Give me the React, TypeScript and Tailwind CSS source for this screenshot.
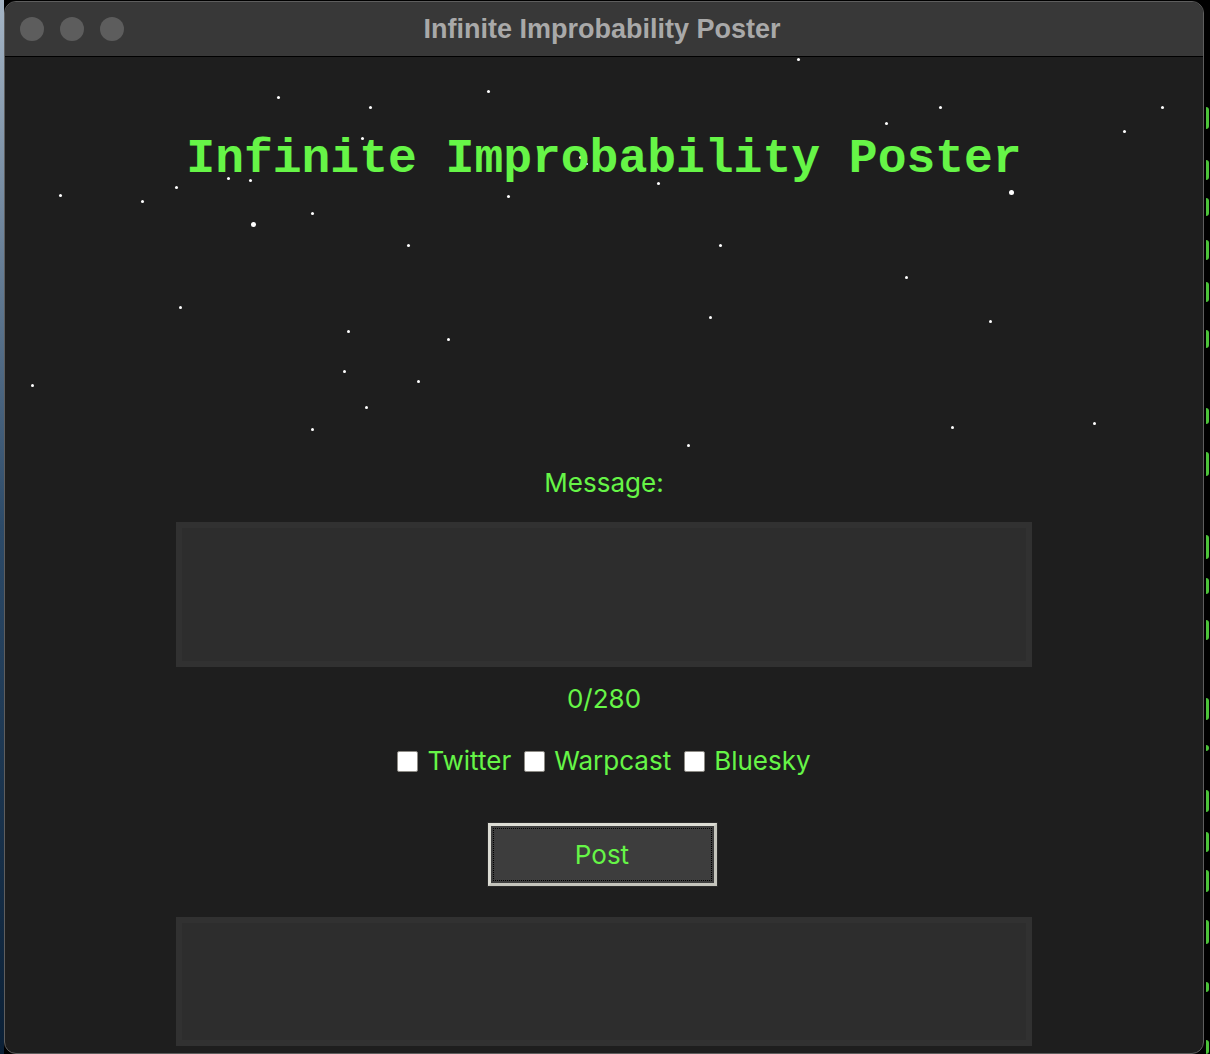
import { useState } from 'react'

// stars on the content canvas, page coordinates [x, y, size]
const stars: [number, number, number][] = [
  [278, 97, 3], [370, 107, 3], [488, 91, 3], [798, 59, 3], [940, 107, 3],
  [1162, 107, 3], [886, 123, 3], [1124, 131, 3], [362, 138, 3], [60, 195, 3],
  [142, 201, 3], [176, 187, 3], [228, 178, 3], [250, 180, 3], [253, 224, 5],
  [312, 213, 3], [508, 196, 3], [658, 183, 3], [580, 157, 3], [587, 164, 2],
  [1011, 192, 5], [408, 245, 3], [720, 245, 3], [906, 277, 3], [180, 307, 3],
  [710, 317, 3], [990, 321, 3], [348, 331, 3], [448, 339, 3], [32, 385, 3],
  [344, 371, 3], [418, 381, 3], [366, 407, 3], [312, 429, 3], [688, 445, 3],
  [952, 427, 3], [1094, 423, 3],
]

const platforms = ['Twitter', 'Warpcast', 'Bluesky']

// green glyph edges of the terminal window behind, [top, height]
const fragments: [number, number][] = [
  [107, 22], [160, 20], [198, 18], [240, 20], [282, 20], [330, 18], [408, 16],
  [452, 24], [535, 24], [578, 16], [620, 20], [698, 22], [745, 6], [790, 22],
  [832, 20], [870, 22], [920, 24], [982, 10], [1040, 14],
]

export default function App() {
  const [message, setMessage] = useState('')
  const [checked, setChecked] = useState<Record<string, boolean>>({})

  return (
    <div className="w-[1210px] h-[1054px] bg-black flex overflow-hidden" style={{ fontFamily: 'Inter, "Liberation Sans", sans-serif' }}>
      <div className="w-[4px] shrink-0 bg-linear-to-b from-[#a6b6c6] via-[#2c4a68] to-[#0b2036]" />

      <div className="w-[1200px] h-[1053px] mt-px shrink-0 flex flex-col rounded-[12px] border border-[#5e5e5e] overflow-hidden bg-[#1e1e1e]">
        {/* title bar */}
        <div className="h-[55px] shrink-0 bg-[#383838] border-b border-black grid grid-cols-[1fr_auto_1fr] items-center">
          <div className="flex gap-[16px] pl-[15px]">
            <span className="w-[24px] h-[24px] rounded-full bg-[#5d5d5d]" />
            <span className="w-[24px] h-[24px] rounded-full bg-[#5d5d5d]" />
            <span className="w-[24px] h-[24px] rounded-full bg-[#5d5d5d]" />
          </div>
          <div className="text-[27px] font-bold text-[#a9a9a9] -translate-x-[2px]" style={{ fontFamily: '"Liberation Sans", Arial, sans-serif' }}>
            Infinite Improbability Poster
          </div>
          <div />
        </div>

        {/* content */}
        <div className="relative flex-1 flex flex-col items-center">
          {stars.map(([x, y, s], i) => (
            <span
              key={i}
              className="absolute rounded-full bg-white"
              style={{ left: x - 5 - s / 2, top: y - 57 - s / 2, width: s, height: s }}
            />
          ))}

          <h1
            className="relative mt-[78px] text-[48px] leading-[48px] font-bold text-[#66f547] whitespace-pre"
            style={{ fontFamily: '"Liberation Mono", "Courier New", monospace' }}
          >
            Infinite Improbability Poster
          </h1>

          <label className="mt-[283px] text-[26px] leading-[34px] text-[#66f547]">Message:</label>

          <textarea
            value={message}
            maxLength={280}
            onChange={(e) => setMessage(e.target.value)}
            className="mt-[22px] w-[856px] h-[145px] resize-none outline-none bg-[#2d2d2d] border-[6px] border-[#313131] text-[#66f547] text-[20px]"
          />

          <div className="mt-[15px] text-[26px] leading-[34px] text-[#66f547]">{message.length}/280</div>

          <div className="mt-[28px] flex items-center h-[34px]">
            {platforms.map((p) => (
              <label key={p} className="flex items-center gap-[9px] mr-[13px] last:mr-0 cursor-pointer">
                <input
                  type="checkbox"
                  checked={!!checked[p]}
                  onChange={() => setChecked((c) => ({ ...c, [p]: !c[p] }))}
                  className="appearance-none w-[21px] h-[21px] bg-white border border-[#8d8b85] rounded-[2px] checked:bg-[#66f547]"
                />
                <span className="text-[26px] leading-[34px] text-[#66f547]">{p}</span>
              </label>
            ))}
          </div>

          <button className="mt-[45px] w-[229px] h-[63px] -translate-x-[2px] bg-[#3d3d3d] border-[3px] border-t-[#dcdcd4] border-l-[#dcdcd4] border-r-[#c4c4bc] border-b-[#c4c4bc] outline outline-1 outline-[#2a2a2a] p-[2px]">
            <div className="w-full h-full border border-dotted border-black flex items-center justify-center text-[26px] text-[#66f547]">
              Post
            </div>
          </button>

          <div className="mt-[31px] w-[856px] h-[129px] bg-[#2d2d2d] border-[6px] border-[#313131]" />
        </div>
      </div>

      {/* edge of a terminal window behind */}
      <div className="flex-1 flex flex-col pl-[2px]">
        {fragments.map(([top, h], i) => (
          <span
            key={i}
            className="w-[3px] rounded-r-full bg-[#4cc23a]"
            style={{ marginTop: i === 0 ? top : top - fragments[i - 1][0] - fragments[i - 1][1], height: h }}
          />
        ))}
      </div>
    </div>
  )
}
